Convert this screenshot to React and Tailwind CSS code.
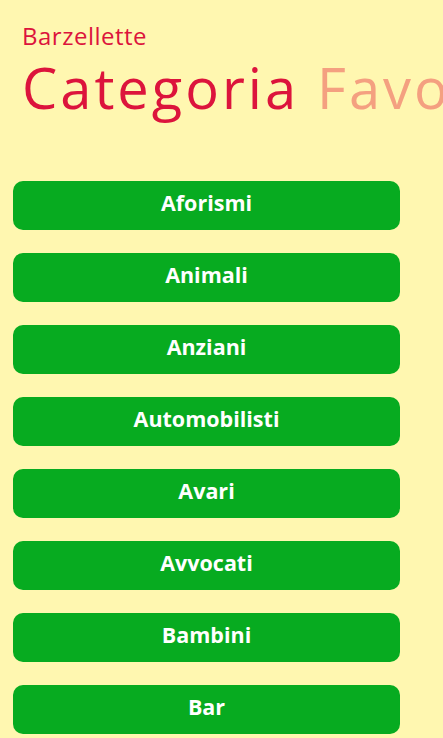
const categories = [
  'Aforismi',
  'Animali',
  'Anziani',
  'Automobilisti',
  'Avari',
  'Avvocati',
  'Bambini',
  'Bar',
];

function App() {
  return (
    <div
      className="w-[443px] h-[738px] overflow-hidden bg-[#fff7b0]"
      style={{ fontFamily: '"Open Sans", "Noto Sans", sans-serif' }}
    >
      <div className="pt-[21px] pl-[22px]">
        <div className="text-[24px] leading-[30px] tracking-[0.5px] text-[#dc143c]">Barzellette</div>
        <div className="mt-[4px] flex whitespace-nowrap text-[56px] leading-[64px] font-normal tracking-[3px]">
          <span className="text-[#dc143c]">Categoria</span>
          <span className="ml-[18px] text-[#f4a080]">Favoriti</span>
        </div>
      </div>

      <div className="mt-[62px] pl-[13px] flex flex-col gap-[23px]">
        {categories.map((name) => (
          <button
            key={name}
            className="w-[387px] h-[49px] pb-[5px] rounded-[10px] bg-[#07ab20] text-white text-[21.5px] font-bold flex items-center justify-center"
          >
            {name}
          </button>
        ))}
      </div>
    </div>
  );
}

export default App;
